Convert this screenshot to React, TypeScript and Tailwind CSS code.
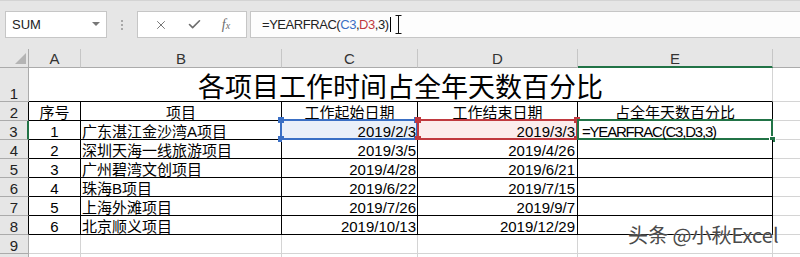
import { X, Check } from 'lucide-react';

const rows = [
  ['1', '广东湛江金沙湾A项目', '2019/2/3', '2019/3/3'],
  ['2', '深圳天海一线旅游项目', '2019/3/5', '2019/4/26'],
  ['3', '广州碧湾文创项目', '2019/4/28', '2019/6/21'],
  ['4', '珠海B项目', '2019/6/22', '2019/7/15'],
  ['5', '上海外滩项目', '2019/7/26', '2019/9/7'],
  ['6', '北京顺义项目', '2019/10/13', '2019/12/29'],
];

const font = 'font-["Liberation_Sans","Noto_Sans_CJK_SC",sans-serif]';

function Handle({ className }: { className: string }) {
  return <span className={`absolute w-[6px] h-[6px] ${className}`} />;
}

export default function App() {
  return (
    <div className={`relative w-[800px] h-[257px] overflow-hidden bg-[#e6e6e6] text-black ${font}`}>
      {/* Formula bar */}
      <div className="h-[49px] border-t border-[#d4d4d4] pt-[10px]">
        <div className="flex h-[27px] items-stretch">
          <div className="ml-[5px] w-[102px] flex items-center justify-between border border-[#c6c6c6] bg-white pl-[6px] pr-[6px]">
            <span className="text-[13px] text-[#222]">SUM</span>
            <svg width="8" height="5" viewBox="0 0 8 5">
              <polygon points="0,0 8,0 4,4" fill="#777" />
            </svg>
          </div>
          <div className="w-[30px] flex flex-col items-center justify-center gap-[2px]">
            <span className="w-[2px] h-[2px] bg-[#a8a8a8]" />
            <span className="w-[2px] h-[2px] bg-[#a8a8a8]" />
            <span className="w-[2px] h-[2px] bg-[#a8a8a8]" />
          </div>
          <div className="w-[110px] flex items-center justify-around border border-[#c6c6c6] bg-white px-[6px]">
            <X size={14} strokeWidth={1.6} color="#6d6d6d" />
            <Check size={15} strokeWidth={2.6} color="#6d6d6d" />
            <span className='font-["Liberation_Serif",serif] italic text-[14px] text-[#6d6d6d] leading-none'>
              f<span className="text-[10px]">x</span>
            </span>
          </div>
          <div className="ml-[3px] flex-1 flex items-center border border-[#c6c6c6] border-r-0 bg-[#fdfdfd] pl-[11px]">
            <span className="text-[13px] tracking-[-0.45px] text-[#222]">
              =YEARFRAC(<span className="text-[#3a6fc4]">C3</span>,<span className="text-[#c0393f]">D3</span>,3)
            </span>
            <span className="ml-[1px] w-[1px] h-[15px] bg-black" />
            <svg className="ml-[4px]" width="7" height="19" viewBox="0 0 7 19">
              <path d="M0.5 0.5 H6.5 M3.5 0.5 V18.5 M0.5 18.5 H6.5" stroke="#111" strokeWidth="1" fill="none" />
            </svg>
          </div>
        </div>
      </div>

      {/* Sheet grid */}
      <div className="grid grid-cols-[29px_52px_201px_136px_160px_195px_1fr] grid-rows-[19px_34px_repeat(9,19px)] text-[15px]">
        {/* column headers */}
        <div className="relative border-r border-b border-[#ababab]">
          <svg className="absolute left-[15px] top-[4px]" width="11" height="11" viewBox="0 0 11 11">
            <polygon points="11,0 11,11 0,11" fill="#b4b4b4" />
          </svg>
        </div>
        {['A', 'B', 'C', 'D'].map((c) => (
          <div key={c} className="border-r border-b border-r-[#c6c6c6] border-b-[#ababab] text-center leading-[18px] pt-[1px] text-[#333]">
            {c}
          </div>
        ))}
        <div className="border-r border-b-2 border-r-[#c6c6c6] border-b-[#217346] text-center leading-[18px] pt-[1px] text-[#333]">E</div>
        <div className="border-b border-[#ababab]" />

        {/* row 1: title */}
        <div className="flex items-end justify-center border-r border-b border-[#ababab] leading-[14px] text-[#222]">1</div>
        <div className="col-span-5 flex items-end justify-center border-r border-b bg-white border-r-[#d4d4d4] border-b-black pb-[2px]">
          <span className='font-["Noto_Sans_CJK_SC",sans-serif] text-[27px] leading-none'>各项目工作时间占全年天数百分比</span>
        </div>
        <div className="border-b border-[#d4d4d4] bg-white" />

        {/* row 2: table header */}
        <div className="flex items-end justify-center border-r border-b border-r-black border-b-[#ababab] leading-[14px] text-[#222]">2</div>
        {['序号', '项目', '工作起始日期', '工作结束日期', '占全年天数百分比'].map((h) => (
          <div key={h} className="flex items-end justify-center border-r border-b border-black bg-white leading-[14px]">
            {h}
          </div>
        ))}
        <div className="border-b border-[#d4d4d4] bg-white" />

        {/* rows 3-8 */}
        {rows.map((r, i) => {
          const active = i === 0;
          return [
            <div
              key={`h${i}`}
              className={`flex items-end justify-center border-b border-b-[#ababab] leading-[14px] text-[#222] ${
                active ? 'border-r-2 border-r-[#217346]' : 'border-r border-r-black'
              }`}
            >
              {i + 3}
            </div>,
            <div key={`a${i}`} className="flex items-end justify-center border-r border-b border-black bg-white leading-[14px]">
              {r[0]}
            </div>,
            <div key={`b${i}`} className="flex items-end border-r border-b border-black bg-white pl-[1px] leading-[14px] whitespace-nowrap">
              {r[1]}
            </div>,
            <div key={`c${i}`} className="relative flex items-end justify-end border-r border-b border-black bg-white pr-[1px] leading-[14px]">
              {active && (
                <span className="absolute -left-[2px] -top-[2px] -right-[1px] -bottom-[1px] border-2 border-[#3a6fc4] bg-[#eaf0f9]">
                  <Handle className="-left-[4px] -top-[4px] bg-[#3a6fc4]" />
                  <Handle className="-right-[4px] -top-[4px] bg-[#3a6fc4]" />
                  <Handle className="-left-[4px] -bottom-[4px] bg-[#3a6fc4]" />
                  <Handle className="-right-[4px] -bottom-[4px] bg-[#3a6fc4]" />
                </span>
              )}
              <span className="relative">{r[2]}</span>
            </div>,
            <div key={`d${i}`} className="relative flex items-end justify-end border-r border-b border-black bg-white pr-[2px] leading-[14px]">
              {active && (
                <span className="absolute -left-[1px] -top-[2px] -right-[1px] -bottom-[1px] border-2 border-[#c0393f] bg-[#fcecec]">
                  <Handle className="-left-[4px] -top-[4px] bg-[#c0393f]" />
                  <Handle className="-right-[4px] -top-[4px] bg-[#c0393f]" />
                  <Handle className="-left-[4px] -bottom-[4px] bg-[#c0393f]" />
                  <Handle className="-right-[4px] -bottom-[4px] bg-[#c0393f]" />
                </span>
              )}
              <span className="relative">{r[3]}</span>
            </div>,
            <div key={`e${i}`} className="relative flex items-end border-r border-b border-black bg-white pl-[4px] leading-[14px]">
              {active && (
                <>
                  <span className="absolute -left-[1px] -top-[2px] -right-[1px] -bottom-[1px] border-2 border-[#217346]" />
                  <span className="absolute -right-[4px] -bottom-[4px] w-[7px] h-[7px] bg-[#217346] border border-white" />
                  <span className="relative tracking-[-1.2px] whitespace-nowrap">=YEARFRAC(C3,D3,3)</span>
                </>
              )}
            </div>,
            <div key={`f${i}`} className="border-b border-[#d4d4d4] bg-white" />,
          ];
        })}

        {/* row 9 */}
        <div className="flex items-end justify-center border-r border-b border-[#ababab] leading-[14px] text-[#222]">9</div>
        {[0, 1, 2, 3, 4].map((k) => (
          <div key={k} className="border-r border-b border-[#d4d4d4] bg-white" />
        ))}
        <div className="border-b border-[#d4d4d4] bg-white" />

        {/* row 10 */}
        <div className="border-r border-[#ababab]" />
        {[0, 1, 2, 3, 4].map((k) => (
          <div key={k} className="border-r border-[#d4d4d4] bg-white" />
        ))}
        <div className="bg-white" />
      </div>

      {/* watermark */}
      <div
        className='absolute left-[628px] top-[225px] font-["Noto_Sans_CJK_SC",sans-serif] text-[20px] leading-none text-[#4a4a4a] whitespace-nowrap [text-shadow:0_0_2px_#fff]'
      >
        头条 @小秋Excel
      </div>
    </div>
  );
}
